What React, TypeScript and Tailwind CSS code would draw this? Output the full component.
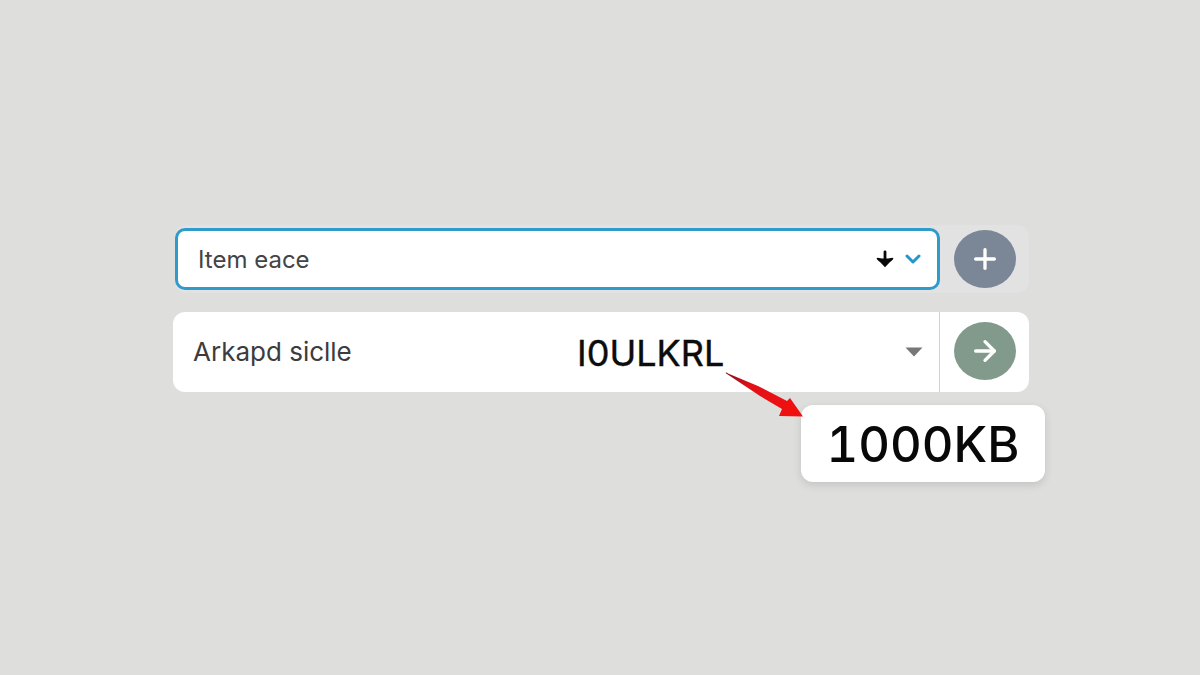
import React from 'react';
import { ArrowRight, ChevronDown, Plus } from 'lucide-react';

const DownArrow = () => (
    <svg viewBox="0 0 18 18" className="w-[18px] h-[18px]" aria-hidden="true">
        <path d="M9 1.8v8" stroke="#080808" strokeWidth="2.8" strokeLinecap="round" />
        <path d="M0.5 8.3 Q1 7.5 3 8 Q9 9 15 8 Q17 7.5 17.5 8.3 Q17 10.5 13.5 12.5 L9 17.2 L4.5 12.5 Q1 10.5 0.5 8.3Z" fill="#080808" />
    </svg>
);

const Caret = () => (
    <svg viewBox="0 0 18 10" className="w-[18px] h-[10px]" aria-hidden="true">
        <path d="M0.5 0.5h17L9 9.5z" fill="#777777" />
    </svg>
);

const ItemRow = () => (
    <div className="flex items-center ml-[2px] h-[68px] rounded-xl bg-[#e2e2e3]">
        <div className="flex flex-1 min-w-0 items-center h-[62px] pl-5 pr-3 gap-[7px] rounded-[10px] border-[3px] border-[#2f9bcb] bg-white">
            <input
                type="text"
                aria-label="Item"
                defaultValue="Item eace"
                className="flex-1 min-w-0 pt-px bg-transparent text-[24px] leading-8 text-[#444444] outline-none"
            />
            <button type="button" aria-label="Move down">
                <DownArrow />
            </button>
            <button type="button" aria-label="Show items">
                <ChevronDown className="w-6 h-6 text-[#2496cb]" strokeWidth={3} />
            </button>
        </div>
        <div className="flex justify-center w-[89px]">
            <button
                type="button"
                aria-label="Add"
                className="flex items-center justify-center w-[62px] h-[58px] rounded-[50%] bg-[#7b8796] text-white"
            >
                <Plus className="w-8 h-8" strokeWidth={2.5} />
            </button>
        </div>
    </div>
);

const SizeRow = () => (
    <div className="flex h-20 rounded-xl bg-white">
        <div className="relative flex flex-1 min-w-0 items-center border-r border-[#d2d2d2]">
            <label htmlFor="size" className="flex-1 pl-5 text-[26px] leading-8 text-[#3c3c3c]">
                Arkapd siclle
            </label>
            <select
                id="size"
                defaultValue="I0ULKRL"
                className="appearance-none w-[362px] h-full pt-px bg-transparent text-[36px] text-[#0c0c0c] outline-none [-webkit-text-stroke:0.4px_#0c0c0c]"
            >
                <option>I0ULKRL</option>
            </select>
            <span className="absolute right-4 pointer-events-none">
                <Caret />
            </span>
        </div>
        <div className="flex justify-center w-[89px] pt-[10px]">
            <button
                type="button"
                aria-label="Continue"
                className="flex items-center justify-center w-[62px] h-[58px] rounded-[50%] bg-[#819a8c] text-white"
            >
                <ArrowRight className="w-8 h-8" strokeWidth={2.5} />
            </button>
        </div>
    </div>
);

const Callout = () => (
    <>
        <div
            role="tooltip"
            className="absolute top-[93px] -right-4 flex items-center justify-center w-[244px] h-[77px] pt-[2px] rounded-xl bg-white text-[49px] leading-none font-medium tabular-nums text-[#080808] shadow-[0_3px_8px_rgba(0,0,0,0.12)]"
        >
            1000KB
        </div>
        <svg viewBox="0 0 80 48" className="absolute top-[59px] right-[225px] w-20 h-12" aria-hidden="true">
            <defs>
                <linearGradient id="tail" x1="0" y1="0" x2="1" y2="0.5">
                    <stop offset="0" stopColor="#7c1018" />
                    <stop offset="0.35" stopColor="#e01018" />
                    <stop offset="1" stopColor="#f01010" />
                </linearGradient>
            </defs>
            <path d="M1.5 2 Q2.5 1 4 2.5 L34 15 L63 30 L66 27 L79 45.5 L55 45 L58 38 L36 25Z" fill="url(#tail)" />
        </svg>
    </>
);

export default function App() {
    return (
        <main className="min-h-screen px-6 pt-[225px] pb-16 bg-[#dededd] font-['Inter','Liberation_Sans',sans-serif]">
            <div className="w-full max-w-[858px] mx-auto pl-[2px]">
                <ItemRow />
                <div className="relative mt-[19px]">
                    <SizeRow />
                    <Callout />
                </div>
            </div>
        </main>
    );
}
